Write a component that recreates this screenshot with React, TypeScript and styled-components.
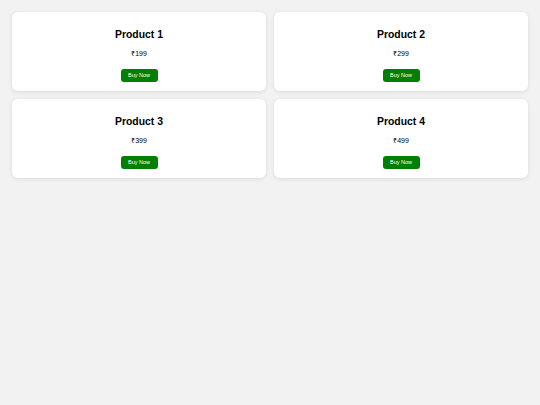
import React from "react";
import styled, { createGlobalStyle } from "styled-components";

const GlobalStyle = createGlobalStyle`
  html, body {
    margin: 0;
    padding: 0;
    background: #f2f2f2;
    font-family: "Liberation Sans", Arial, sans-serif;
  }
`;

const Grid = styled.div`
  display: grid;
  grid-template-columns: 1fr 1fr;
  gap: 8px;
  padding: 12px;
`;

const Card = styled.div`
  background: #ffffff;
  border-radius: 6px;
  box-shadow: 0 1px 4px rgba(0, 0, 0, 0.1);
  height: 79px;
  box-sizing: border-box;
  padding-top: 17px;
  display: flex;
  flex-direction: column;
  align-items: center;
`;

const Title = styled.h2`
  margin: 0;
  font-size: 10.4px;
  line-height: 12px;
  font-weight: bold;
  color: #000;
`;

const Price = styled.p`
  margin: 8px 0 0;
  font-size: 7px;
  line-height: 9px;
  color: #000;
`;

const BuyButton = styled.button`
  margin-top: 11px;
  width: 37px;
  height: 13px;
  padding: 0;
  border: none;
  border-radius: 3px;
  background: #008000;
  color: #fff;
  font-family: "Liberation Sans", Arial, sans-serif;
  font-size: 5.5px;
  line-height: 13px;
  cursor: pointer;
`;

const products = [
  { name: "Product 1", price: "₹199" },
  { name: "Product 2", price: "₹299" },
  { name: "Product 3", price: "₹399" },
  { name: "Product 4", price: "₹499" },
];

export default function App() {
  return (
    <>
      <GlobalStyle />
      <Grid>
        {products.map((p) => (
          <Card key={p.name}>
            <Title>{p.name}</Title>
            <Price>{p.price}</Price>
            <BuyButton>Buy Now</BuyButton>
          </Card>
        ))}
      </Grid>
    </>
  );
}
